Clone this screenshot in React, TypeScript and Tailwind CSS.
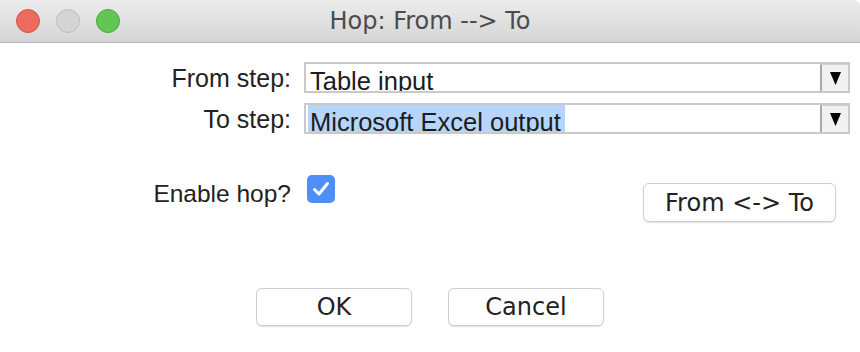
import React from "react";

function TrafficLights() {
  return (
    <div className="flex items-center gap-[16px] pl-[16px]">
      <span className="h-[24px] w-[24px] rounded-full border border-[#d6544a] bg-[#ee6a5f]" />
      <span className="h-[24px] w-[24px] rounded-full border border-[#bdbdbd] bg-[#d4d4d4]" />
      <span className="h-[24px] w-[24px] rounded-full border border-[#4ca83f] bg-[#62c655]" />
    </div>
  );
}

function Combo({ value, selected }: { value: string; selected?: boolean }) {
  return (
    <div className="flex h-[31px] flex-1 overflow-hidden border-2 border-[#c9c9c9] bg-white">
      <div className="flex-1 overflow-hidden pl-[2px]">
        <span
          className={
            "inline-block h-[28px] pl-[2px] text-[25.5px] leading-[34px] text-[#1c1c1c] " +
            (selected ? "bg-[#b5d5fc] pr-[4px]" : "")
          }
        >
          {value}
        </span>
      </div>
      <div className="flex w-[28px] items-center justify-center border-l-2 border-l-[#a9a9a9] border-t border-t-[#d0d0d0] bg-[#f1f1f1]">
        <svg width="11" height="13" viewBox="0 0 11 13">
          <path d="M0 0 H11 L5.5 13 Z" fill="#000" />
        </svg>
      </div>
    </div>
  );
}

function Row({ label, children, className = "" }: { label: string; children: React.ReactNode; className?: string }) {
  return (
    <div className={"flex h-[31px] items-center pr-[10px] " + className}>
      <label className="w-[291px] shrink-0 pt-[2px] text-right text-[25px] text-[#222]">{label}</label>
      <div className="ml-[13px] flex flex-1">{children}</div>
    </div>
  );
}

function MacButton({ children, className = "" }: { children: React.ReactNode; className?: string }) {
  return (
    <button
      type="button"
      className={
        "flex items-center justify-center rounded-[6px] border border-[#cfcfcf] bg-white text-[24px] text-[#222] shadow-[0_1px_1px_rgba(0,0,0,0.12)] font-['DejaVu_Sans',sans-serif] " +
        className
      }
    >
      {children}
    </button>
  );
}

export default function App() {
  return (
    <div className="flex h-[352px] w-[860px] flex-col overflow-hidden bg-white font-['Liberation_Sans',Arial,sans-serif]">
      <div className="grid h-[43px] shrink-0 grid-cols-[1fr_auto_1fr] items-center rounded-tr-[6px] border-b border-[#b4b4b4] bg-gradient-to-b from-[#ececec] to-[#d5d5d5]">
        <TrafficLights />
        <div className="font-['DejaVu_Sans',sans-serif] text-[24px] text-[#4c4c4c]">Hop: From --&gt; To</div>
        <div />
      </div>

      <div className="flex flex-1 flex-col pt-[19px]">
        <Row label="From step:">
          <Combo value="Table input" />
        </Row>
        <Row label="To step:" className="mt-[10px]">
          <Combo value="Microsoft Excel output" selected />
        </Row>

        <div className="mt-[41px] flex items-start">
          <label className="mt-[5px] w-[291px] shrink-0 text-right text-[24.5px] leading-[28px] text-[#222]">
            Enable hop?
          </label>
          <span className="ml-[16px] flex h-[28px] w-[28px] items-center justify-center rounded-[5px] bg-[#4d8ff6]">
            <svg width="18" height="16" viewBox="0 0 18 16">
              <path d="M2.5 8.5 L7 13 L15.5 2.5" fill="none" stroke="#fff" strokeWidth="3" strokeLinecap="round" strokeLinejoin="round" />
            </svg>
          </span>
          <MacButton className="ml-auto mr-[24px] mt-[8px] h-[39px] w-[193px]">From &lt;-&gt; To</MacButton>
        </div>

        <div className="mt-auto flex justify-center gap-[36px] pb-[26px]">
          <MacButton className="h-[38px] w-[156px]">OK</MacButton>
          <MacButton className="h-[38px] w-[156px]">Cancel</MacButton>
        </div>
      </div>
    </div>
  );
}
